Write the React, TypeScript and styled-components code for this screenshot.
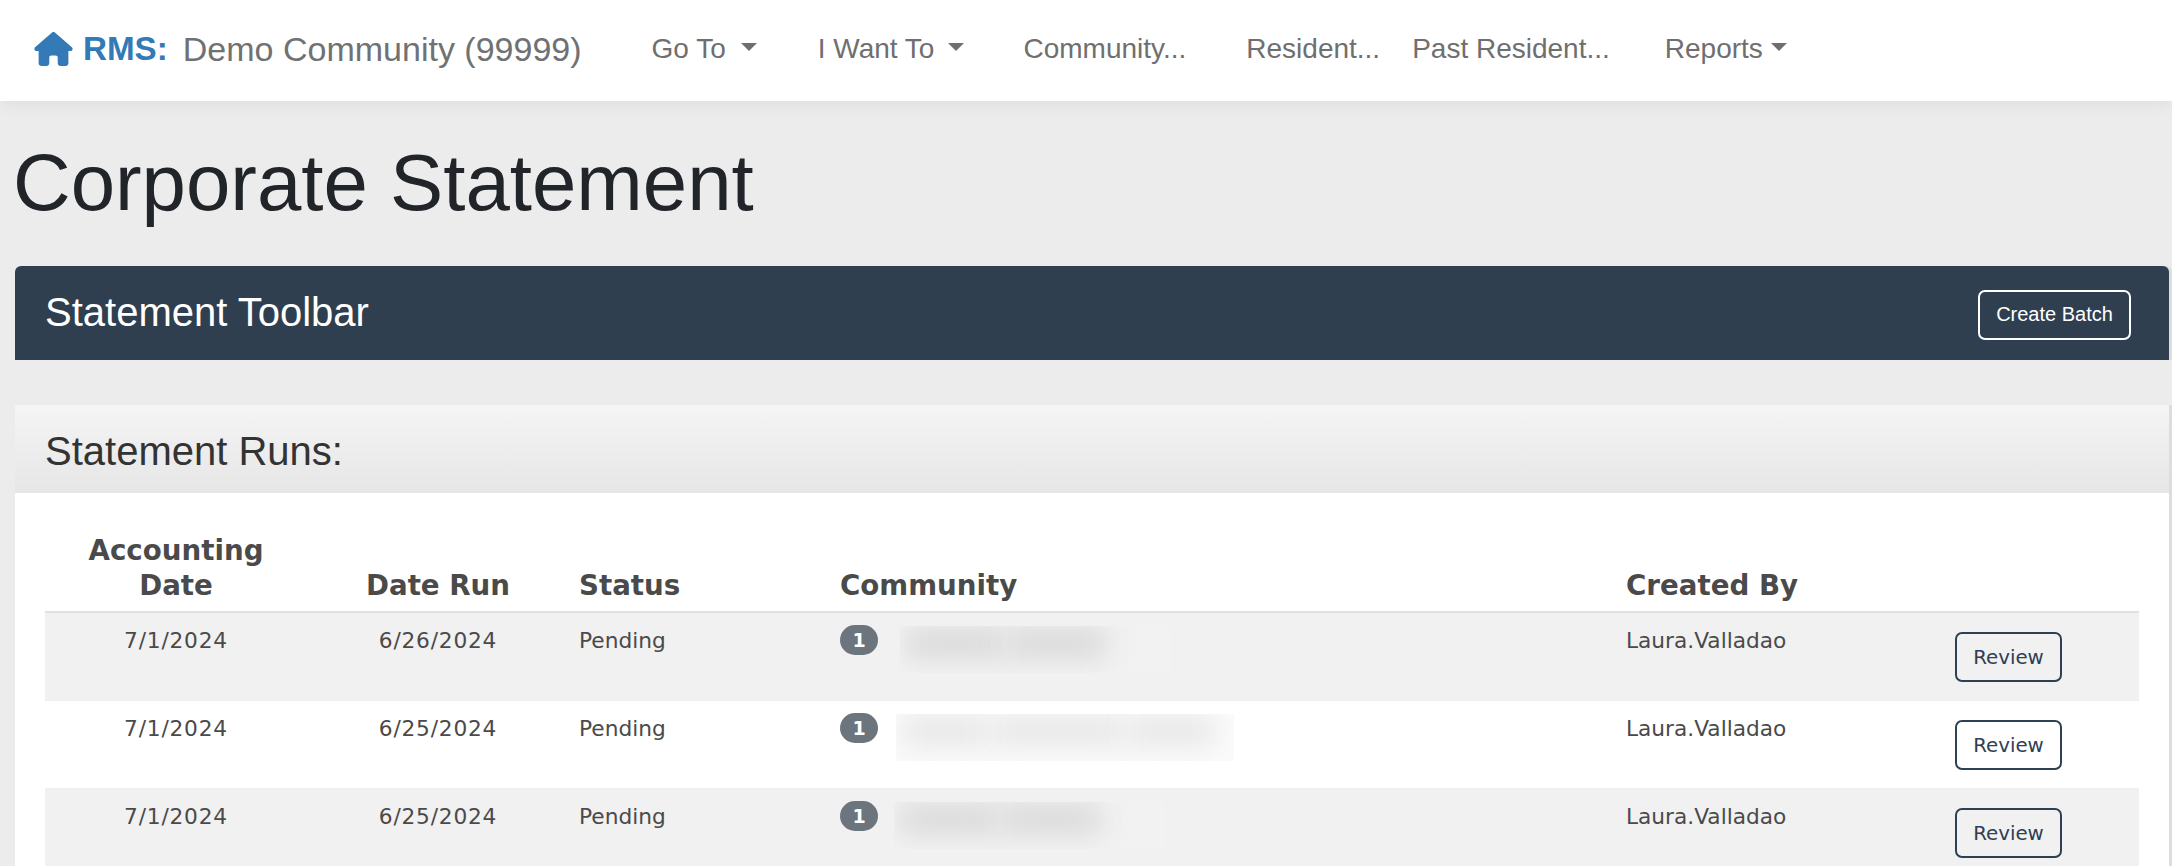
import React from 'react'
import styled, { createGlobalStyle } from 'styled-components'
import { FaHouse } from 'react-icons/fa6'

const GlobalStyle = createGlobalStyle`
  html, body {
    margin: 0;
    height: 100%;
    overflow: hidden;
    background: #ececec;
    font-family: "Liberation Sans", Arial, sans-serif;
  }
`

const TopNav = styled.nav`
  position: relative;
  z-index: 2;
  display: flex;
  align-items: center;
  height: 101px;
  padding: 0 0 3px 34px;
  box-sizing: border-box;
  background: #fff;
  box-shadow: 0 2px 16px rgba(0, 0, 0, 0.07);
`

const Brand = styled.div`
  display: flex;
  align-items: center;
  color: #6f7173;
  font-size: 34px;
  white-space: nowrap;
`

const HomeIcon = styled(FaHouse)`
  width: 39px;
  height: 34px;
  color: #337ab7;
  margin-right: 10px;
`

const BrandName = styled.b`
  color: #337ab7;
  font-size: 33.2px;
  margin-right: 15px;
`

const NavItem = styled.a<{ $left: number }>`
  display: flex;
  align-items: center;
  margin-left: ${p => p.$left}px;
  color: #6f6f6f;
  font-size: 28px;
  white-space: nowrap;
`

const Caret = styled.span<{ $gap: number }>`
  width: 0;
  height: 0;
  margin-left: ${p => p.$gap}px;
  margin-bottom: 4px;
  border-top: 8px solid #6f6f6f;
  border-left: 8px solid transparent;
  border-right: 8px solid transparent;
`

const Page = styled.main`
  padding: 0 3px 0 15px;
`

const PageTitle = styled.h1`
  margin: 0 0 37px -2px;
  padding-top: 36px;
  color: #212529;
  font-size: 79.8px;
  font-weight: 400;
  line-height: 92px;
`

const Toolbar = styled.section`
  display: flex;
  align-items: center;
  justify-content: space-between;
  height: 94px;
  padding: 0 38px 0 30px;
  box-sizing: border-box;
  border-radius: 6px 6px 0 0;
  background: #2f3f50;
  box-shadow: 3px 0 0 #ddd;
`

const ToolbarTitle = styled.h2`
  margin: 0 0 2px;
  color: #fff;
  font-size: 40px;
  font-weight: 400;
`

const ToolbarButton = styled.button`
  width: 153px;
  height: 50px;
  margin-top: 3px;
  padding: 0;
  border: 2px solid #fff;
  border-radius: 7px;
  background: transparent;
  color: #fff;
  font-family: inherit;
  font-size: 20px;
`

const Card = styled.section`
  margin-top: 45px;
  background: #fff;
  box-shadow: 3px 0 0 #ddd;
`

const CardHeader = styled.header`
  display: flex;
  align-items: center;
  height: 88px;
  padding: 5px 30px 0;
  box-sizing: border-box;
  background: linear-gradient(#f5f5f5, #e6e6e6);
  color: #333;
  font-size: 40px;
`

const CardBody = styled.div`
  padding: 30px 30px 0;
`

const Table = styled.table`
  width: 2094px;
  table-layout: fixed;
  border-collapse: collapse;
  font-family: "DejaVu Sans", Verdana, sans-serif;
  color: #4a4a4a;
`

const HeadCell = styled.th<{ $center?: boolean }>`
  padding: 10px 10px 8px;
  vertical-align: bottom;
  border-bottom: 2px solid #dee2e6;
  font-size: 27.7px;
  font-weight: 700;
  line-height: 35px;
  text-align: ${p => (p.$center ? 'center' : 'left')};
`

const Row = styled.tr`
  &:nth-child(odd) {
    background: #f1f1f1;
  }
`

const Cell = styled.td`
  padding: 12px 10px 10px;
  vertical-align: top;
  border-top: 1px solid #eee;
  font-size: 21.7px;
  line-height: 32px;
  text-align: left;
`

const DateCell = styled(Cell)`
  text-align: center;
  letter-spacing: 0.8px;
`

const CommunityWrap = styled.div`
  display: flex;
  align-items: flex-start;
`

const Badge = styled.span`
  flex: none;
  width: 38px;
  height: 30px;
  border-radius: 15px;
  background: #6c757d;
  color: #fff;
  font-size: 19px;
  font-weight: 700;
  line-height: 30px;
  text-align: center;
`

const Smudge = styled.div<{ $left: number; $width: number; $right: number; $tint: string }>`
  display: flex;
  gap: 4px;
  width: ${p => p.$width}px;
  height: 47px;
  margin: 1px 0 0 ${p => p.$left}px;
  padding: 2px ${p => p.$right}px 0 6px;
  box-sizing: border-box;
  overflow: hidden;
  background: ${p => p.$tint};
`

const Blob = styled.div<{ $size: number; $shade: string }>`
  flex: ${p => p.$size} 1 0;
  height: 30px;
  background: ${p => p.$shade};
  filter: blur(14px);
`

const ReviewButton = styled.button`
  display: block;
  width: 107px;
  height: 50px;
  margin: 7px 0 8px;
  padding: 0;
  border: 2px solid #2e4053;
  border-radius: 7px;
  background: transparent;
  color: #2e4053;
  font-family: "DejaVu Sans", Verdana, sans-serif;
  font-size: 19.8px;
`

const navItems = [
  { label: 'Go To', left: 70, caret: 15 },
  { label: 'I Want To', left: 61, caret: 14 },
  { label: 'Community...', left: 59 },
  { label: 'Resident...', left: 60 },
  { label: 'Past Resident...', left: 32 },
  { label: 'Reports', left: 55, caret: 8 }
]

const runs = [
  { accounting: '7/1/2024', run: '6/26/2024', left: 22, width: 270, right: 64, tint: '#f2f2f2', shade: '#d8d8d8', blobs: [3, 3] },
  { accounting: '7/1/2024', run: '6/25/2024', left: 18, width: 338, right: 20, tint: '#fbfbfb', shade: '#e6e6e6', blobs: [2, 3, 2] },
  { accounting: '7/1/2024', run: '6/25/2024', left: 16, width: 270, right: 64, tint: '#f2f2f2', shade: '#d8d8d8', blobs: [3, 3] }
]

export default function App() {
  return (
    <>
      <GlobalStyle />
      <TopNav>
        <Brand>
          <HomeIcon />
          <BrandName>RMS:</BrandName>
          Demo Community (99999)
        </Brand>
        {navItems.map(item => (
          <NavItem key={item.label} $left={item.left}>
            {item.label}
            {item.caret && <Caret $gap={item.caret} />}
          </NavItem>
        ))}
      </TopNav>
      <Page>
        <PageTitle>Corporate Statement</PageTitle>
        <Toolbar>
          <ToolbarTitle>Statement Toolbar</ToolbarTitle>
          <ToolbarButton>Create Batch</ToolbarButton>
        </Toolbar>
        <Card>
          <CardHeader>Statement Runs:</CardHeader>
          <CardBody>
            <Table>
              <colgroup>
                <col width={262} />
                <col width={262} />
                <col width={261} />
                <col width={786} />
                <col width={329} />
                <col width={194} />
              </colgroup>
              <thead>
                <tr>
                  <HeadCell $center>
                    Accounting
                    <br />
                    Date
                  </HeadCell>
                  <HeadCell $center>Date Run</HeadCell>
                  <HeadCell>Status</HeadCell>
                  <HeadCell>Community</HeadCell>
                  <HeadCell>Created By</HeadCell>
                  <HeadCell />
                </tr>
              </thead>
              <tbody>
                {runs.map((run, i) => (
                  <Row key={i}>
                    <DateCell>{run.accounting}</DateCell>
                    <DateCell>{run.run}</DateCell>
                    <Cell>Pending</Cell>
                    <Cell>
                      <CommunityWrap>
                        <Badge>1</Badge>
                        <Smudge $left={run.left} $width={run.width} $right={run.right} $tint={run.tint}>
                          {run.blobs.map((size, j) => (
                            <Blob key={j} $size={size} $shade={run.shade} />
                          ))}
                        </Smudge>
                      </CommunityWrap>
                    </Cell>
                    <Cell>Laura.Valladao</Cell>
                    <Cell>
                      <ReviewButton>Review</ReviewButton>
                    </Cell>
                  </Row>
                ))}
              </tbody>
            </Table>
          </CardBody>
        </Card>
      </Page>
    </>
  )
}
